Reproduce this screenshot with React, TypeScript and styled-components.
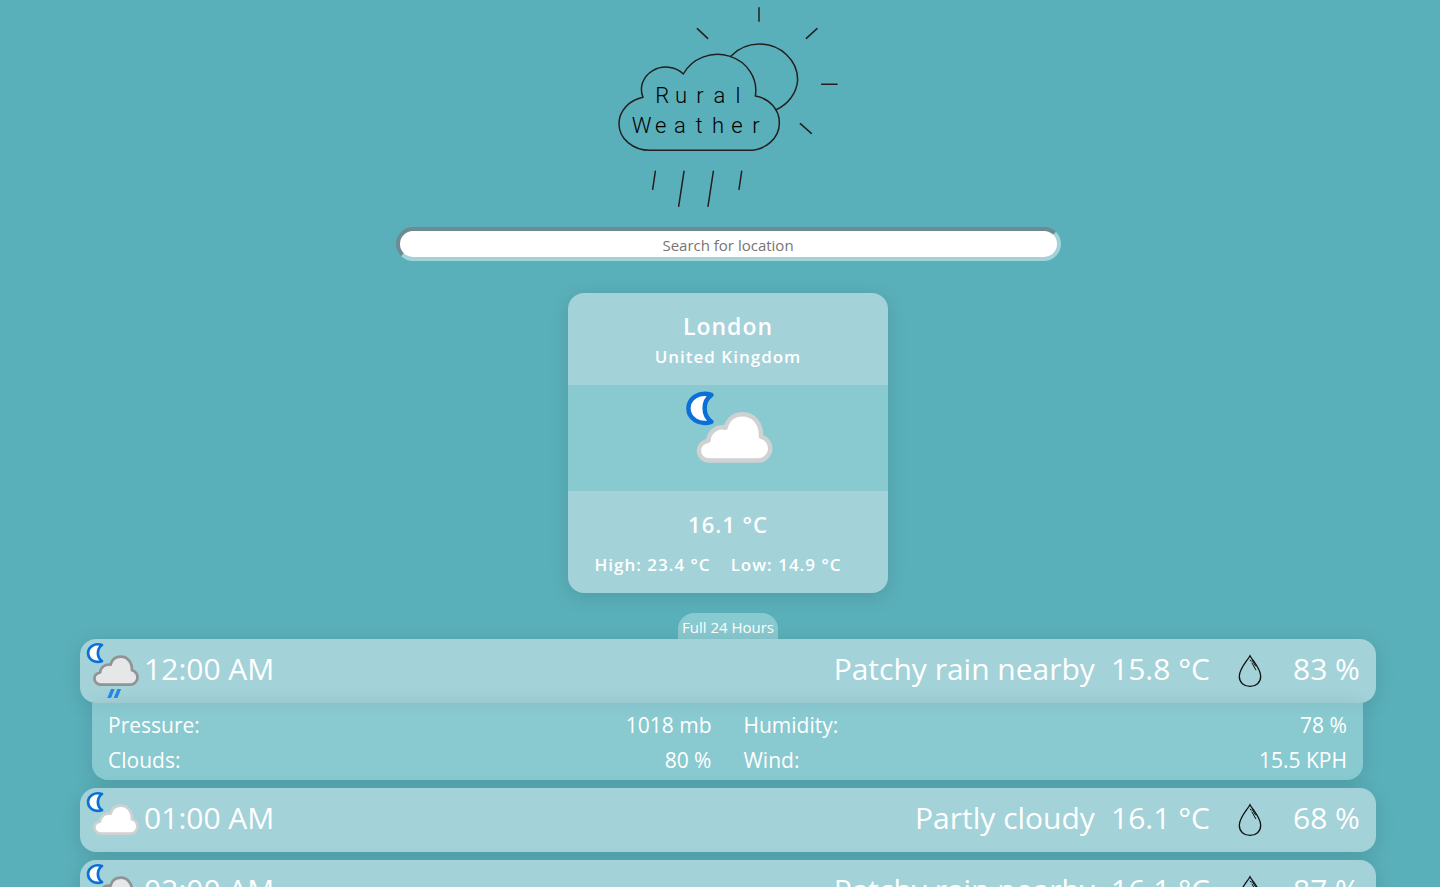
import React, { useState } from "react";
import styled, { createGlobalStyle } from "styled-components";

const sans = `"Segoe UI", "Open Sans", "Noto Sans", sans-serif`;
const panel = "#a3d2d9";
const panelDeep = "#89c9d0";
const shadow = "0 4px 20px rgba(0, 0, 0, 0.12)";

const GlobalStyle = createGlobalStyle`
  * { box-sizing: border-box; }
  html, body, #root { height: 100%; }
  body {
    margin: 0;
    background: #5ab0ba;
    color: #fff;
    font-family: ${sans};
  }
`;

const Page = styled.main`
  height: 100%;
  overflow: auto;
  scrollbar-width: none;
  padding-left: 16px;
  display: flex;
  flex-direction: column;
  align-items: center;
  & > * { flex-shrink: 0; }
`;

const Logo = styled.svg`
  width: 250px;
  height: 215px;
  display: block;
  fill: none;
  stroke: #231f20;
  stroke-width: 4.5;
  stroke-linecap: round;
  stroke-linejoin: round;
`;

const LogoText = styled.text`
  font-family: Roboto, sans-serif;
  font-weight: 300;
  font-size: 66px;
  text-anchor: middle;
  fill: #000;
  stroke: none;
`;

const SearchForm = styled.form`
  width: 46.7%;
  margin: 12px 0 32px;
  display: flex;
`;

const SearchInput = styled.input`
  flex: 1;
  min-width: 0;
  height: 34px;
  padding: 4px 8px 2px;
  border: 4px solid;
  border-color: #6d8b90 ${panel} ${panel} #6d8b90;
  border-radius: 17px;
  background: #fff;
  color: #333;
  font-family: ${sans};
  font-size: 15px;
  text-align: center;
  outline: none;
  &::placeholder { color: #757575; }
`;

const Card = styled.section`
  width: 320px;
  border-radius: 16px;
  overflow: hidden;
  background: ${panel};
  box-shadow: ${shadow};
  text-align: center;
  letter-spacing: 1px;
  font-weight: 600;
`;

const CardHead = styled.header`
  height: 92px;
  padding-top: 17px;
`;

const City = styled.h1`
  margin: 0;
  font-size: 23px;
  line-height: 32px;
  font-weight: 600;
`;

const Country = styled.h2`
  margin: 0;
  font-size: 17px;
  line-height: 30px;
  font-weight: 600;
`;

const CardPicture = styled.div`
  height: 106px;
  display: flex;
  justify-content: center;
  background: ${panelDeep};
`;

const CardFoot = styled.div`
  height: 102px;
  padding-top: 17px;
`;

const Temperature = styled.p`
  margin: 0;
  font-size: 22px;
  line-height: 32px;
`;

const Range = styled.p`
  margin: 10px 0 0;
  padding-right: 20px;
  display: flex;
  justify-content: center;
  gap: 20px;
  font-size: 17px;
  line-height: 30px;
`;

const Tab = styled.button`
  margin-top: 20px;
  height: 26px;
  padding: 2px 4px 0;
  border: 0;
  border-radius: 16px 16px 0 0;
  background: ${panelDeep};
  color: #fff;
  font-family: ${sans};
  font-size: 15px;
  line-height: 24px;
`;

const HourList = styled.ul`
  width: 91%;
  margin: 0;
  padding: 0;
  list-style: none;
`;

const HourItem = styled.li`
  margin-bottom: 8px;
`;

const HourRow = styled.button`
  width: 100%;
  height: 64px;
  padding: 0 16px 0 0;
  border: 0;
  border-radius: 16px;
  background: ${panel};
  box-shadow: ${shadow};
  color: #fff;
  display: flex;
  align-items: center;
  text-align: left;
  font-family: ${sans};
  font-size: 30px;
  line-height: 60px;
  white-space: nowrap;
`;

const Time = styled.span`
  flex: 1;
  height: 64px;
`;

const Condition = styled.span`
  height: 64px;
`;

const Degrees = styled.span`
  height: 64px;
  width: 115px;
  text-align: right;
`;

const Chance = styled.span`
  height: 64px;
  width: 98px;
  text-align: right;
`;

const DropIcon = styled.svg`
  width: 24px;
  height: 34px;
  margin-left: 28px;
  fill: none;
  stroke: #111;
  stroke-linecap: round;
`;

const Details = styled.dl`
  margin: 0 13px 0 12px;
  padding: 5px 16px 2px;
  display: grid;
  grid-template-columns: 1fr 1fr;
  column-gap: 32px;
  border-radius: 0 0 16px 16px;
  background: linear-gradient(#87c4cb, ${panelDeep} 14px);
  box-shadow: ${shadow};
  font-size: 21px;
  line-height: 35px;
`;

const Detail = styled.div`
  display: flex;
  justify-content: space-between;
  dt, dd { margin: 0; }
`;

const Picture = styled.svg<{ $size: number }>`
  width: ${(p) => p.$size}px;
  height: ${(p) => p.$size}px;
  flex: none;
`;

function NightIcon({ size, rain }: { size: number; rain?: boolean }) {
  return (
    <Picture $size={size} viewBox="0 0 64 64" aria-hidden="true">
      <path
        d="M22 6C14.5 3.5 8.1 8 8.1 14.1S14.5 24.7 22 22.2Q17.9 19.3 17.9 14.1T22 6Z"
        fill="#fff"
        stroke="#0a70d8"
        strokeWidth="2.7"
        strokeLinejoin="round"
      />
      <path
        d="M20.6 45.6H50.2A7.3 7.3 0 0 0 51.9 31.2C52.3 23.4 47.6 17.7 40.8 17.7C35.6 17.7 31.8 20.9 30.5 25.8C25.4 24.6 20.4 28.3 20.2 33.5C16.6 34.3 14.4 36.7 14.4 39.5C14.4 42.9 17.1 45.6 20.6 45.6Z"
        fill={rain ? "#e6e7e9" : "#fff"}
        stroke={rain ? "#919395" : "#d0d1d2"}
        strokeWidth="2.7"
        strokeLinejoin="round"
      />
      {rain && <path d="M31 50h3.7l-3.7 9h-3.7zM37.4 50h3.7l-3.7 9h-3.7z" fill="#2585e8" />}
    </Picture>
  );
}

function Drop() {
  return (
    <DropIcon viewBox="0 0 24 34" aria-hidden="true">
      <path
        d="M12 1.7C9.5 6.5 1.3 14.5 1.3 22.3C1.3 28.5 6 32.4 12 32.4S22.7 28.5 22.7 22.3C22.7 14.5 14.5 6.5 12 1.7Z"
        strokeWidth="1.3"
      />
      <path d="M12.2 6L13 7.2M14 9L17.8 15.8M14 6.2L17.6 12" strokeWidth="1" />
    </DropIcon>
  );
}

type Hour = {
  time: string;
  condition: string;
  temp: string;
  chance: string;
  rain: boolean;
  details: [string, string][];
};

const nightDetails: [string, string][] = [
  ["Pressure:", "1018 mb"],
  ["Humidity:", "78 %"],
  ["Clouds:", "80 %"],
  ["Wind:", "15.5 KPH"],
];

const hours: Hour[] = [
  { time: "12:00 AM", condition: "Patchy rain nearby", temp: "15.8 °C", chance: "83 %", rain: true, details: nightDetails },
  { time: "01:00 AM", condition: "Partly cloudy", temp: "16.1 °C", chance: "68 %", rain: false, details: nightDetails },
  { time: "02:00 AM", condition: "Patchy rain nearby", temp: "16.1 °C", chance: "87 %", rain: true, details: nightDetails },
];

export default function App() {
  const [open, setOpen] = useState(0);
  return (
    <>
      <GlobalStyle />
      <Page>
        <Logo viewBox="9 0 750 645" role="img" aria-label="Rural Weather">
          <path d="M150 451H446A92 81 0 0 0 538 370A88 81 0 0 0 466 288A115 108 0 0 0 250 222A73 67 0 0 0 129 292A93 81 0 0 0 57 372A93 79 0 0 0 150 451Z" />
          <path d="M393 168A116 108 0 0 1 477 132A116 108 0 0 1 593 240A116 108 0 0 1 527 330" />
          <path d="M477 23V64M292 86L323 115M651 86L619 115M665 253H711M601 371L634 400" />
          <path d="M166 514L158 568M252 514L236 619M340 514L324 619M425 514L417 568" />
          <LogoText x="187 243 300 358 414" y="309">Rural</LogoText>
          <LogoText x="125 182 240 297 354 411 468" y="398">Weather</LogoText>
        </Logo>
        <SearchForm onSubmit={(e) => e.preventDefault()}>
          <SearchInput type="text" placeholder="Search for location" aria-label="Search for location" />
        </SearchForm>
        <Card>
          <CardHead>
            <City>London</City>
            <Country>United Kingdom</Country>
          </CardHead>
          <CardPicture>
            <NightIcon size={106} />
          </CardPicture>
          <CardFoot>
            <Temperature>16.1 °C</Temperature>
            <Range>
              <span>High: 23.4 °C</span>
              <span>Low: 14.9 °C</span>
            </Range>
          </CardFoot>
        </Card>
        <Tab type="button">Full 24 Hours</Tab>
        <HourList>
          {hours.map((h, i) => (
            <HourItem key={h.time}>
              <HourRow type="button" aria-expanded={open === i} onClick={() => setOpen(open === i ? -1 : i)}>
                <NightIcon size={64} rain={h.rain} />
                <Time>{h.time}</Time>
                <Condition>{h.condition}</Condition>
                <Degrees>{h.temp}</Degrees>
                <Drop />
                <Chance>{h.chance}</Chance>
              </HourRow>
              {open === i && (
                <Details>
                  {h.details.map(([label, value]) => (
                    <Detail key={label}>
                      <dt>{label}</dt>
                      <dd>{value}</dd>
                    </Detail>
                  ))}
                </Details>
              )}
            </HourItem>
          ))}
        </HourList>
      </Page>
    </>
  );
}
